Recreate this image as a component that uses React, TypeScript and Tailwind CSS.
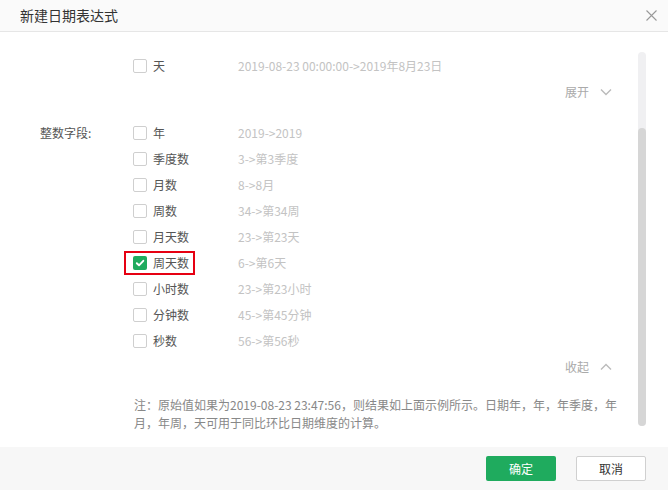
import React from 'react';

const FONT = { fontFamily: '"Noto Sans CJK SC", "Noto Sans", sans-serif' };

type Opt = { name: string; example: string; checked?: boolean; marked?: boolean };

const intOptions: Opt[] = [
  { name: '年', example: '2019->2019' },
  { name: '季度数', example: '3->第3季度' },
  { name: '月数', example: '8->8月' },
  { name: '周数', example: '34->第34周' },
  { name: '月天数', example: '23->第23天' },
  { name: '周天数', example: '6->第6天', checked: true, marked: true },
  { name: '小时数', example: '23->第23小时' },
  { name: '分钟数', example: '45->第45分钟' },
  { name: '秒数', example: '56->第56秒' },
];

function Checkbox({ checked }: { checked?: boolean }) {
  if (checked) {
    return (
      <span className="w-[14px] h-[14px] rounded-[2px] bg-[#1fab5e] flex items-center justify-center shrink-0">
        <svg width="10" height="10" viewBox="0 0 10 10">
          <path d="M1.8 5.2 L4 7.3 L8.3 2.8" fill="none" stroke="#fff" strokeWidth="1.9" strokeLinecap="round" strokeLinejoin="round" />
        </svg>
      </span>
    );
  }
  return <span className="w-[14px] h-[14px] rounded-[2px] border border-[#cfcfcf] bg-white shrink-0" />;
}

function OptionRow({ opt }: { opt: Opt }) {
  return (
    <div className="h-[26px] flex items-center">
      <div className="relative flex items-center gap-[6px] w-[105px]">
        <Checkbox checked={opt.checked} />
        <span className="text-[12px] text-[#555]">{opt.name}</span>
        {opt.marked && (
          <span className="absolute left-[-9px] top-1/2 -translate-y-1/2 w-[71px] h-[24px] border-2 border-[#e60012]" />
        )}
      </div>
      <span className="text-[12px] text-[#c3c3c3] whitespace-nowrap">{opt.example}</span>
    </div>
  );
}

function Toggle({ label, up }: { label: string; up?: boolean }) {
  return (
    <div className="h-[20px] flex items-center justify-end pr-[26px] gap-[11px]">
      <span className="text-[12px] text-[#aaa]">{label}</span>
      <svg width="12" height="8" viewBox="0 0 12 8">
        <path
          d={up ? 'M1 6.5 L6 1.5 L11 6.5' : 'M1 1.5 L6 6.5 L11 1.5'}
          fill="none"
          stroke="#bbb"
          strokeWidth="1.4"
        />
      </svg>
    </div>
  );
}

export default function App() {
  return (
    <div className="w-[668px] h-[490px] bg-white flex flex-col" style={FONT}>
      <div className="h-[32px] bg-[#fafafa] border-b border-[#e6e6e6] flex items-center justify-between pl-[20px] pr-[11px] shrink-0">
        <span className="text-[14px] text-[#333]">新建日期表达式</span>
        <svg width="11" height="11" viewBox="0 0 11 11">
          <path d="M0.5 0.5 L10.5 10.5 M10.5 0.5 L0.5 10.5" stroke="#999" strokeWidth="1.1" />
        </svg>
      </div>

      <div className="flex-1 flex min-h-0">
        <div className="flex-1 pt-[21px]">
          <div className="pl-[133px]">
            <OptionRow opt={{ name: '天', example: '2019-08-23 00:00:00->2019年8月23日' }} />
          </div>
          <div className="mt-[3px]">
            <Toggle label="展开" />
          </div>

          <div className="flex mt-[18px]">
            <div className="w-[133px] pl-[40px] h-[26px] flex items-center">
              <span className="text-[12px] text-[#555]">整数字段:</span>
            </div>
            <div className="flex flex-col">
              {intOptions.map((o) => (
                <OptionRow key={o.name} opt={o} />
              ))}
            </div>
          </div>

          <div className="mt-[3px]">
            <Toggle label="收起" up />
          </div>

          <p className="mt-[19px] pl-[134px] text-[12px] leading-[18px] text-[#888] whitespace-nowrap">
            注：原始值如果为2019-08-23 23:47:56，则结果如上面示例所示。日期年，年，年季度，年
            <br />
            月，年周，天可用于同比环比日期维度的计算。
          </p>
        </div>

        <div className="w-[8px] mt-[20px] mb-[21px] mr-[22px] rounded-full bg-[#f0f0f2] flex flex-col shrink-0">
          <div className="flex-1 mt-[76px] rounded-full bg-[#d6d6d6]" />
        </div>
      </div>

      <div className="h-[43px] bg-[#f7f7f7] flex items-center justify-end gap-[20px] pr-[22px] shrink-0">
        <button className="w-[70px] h-[25px] rounded-[2px] bg-[#1fab5e] text-white text-[12px]">确定</button>
        <button className="w-[70px] h-[25px] rounded-[2px] bg-white border border-[#d0d0d0] text-[#333] text-[12px]">取消</button>
      </div>
    </div>
  );
}
